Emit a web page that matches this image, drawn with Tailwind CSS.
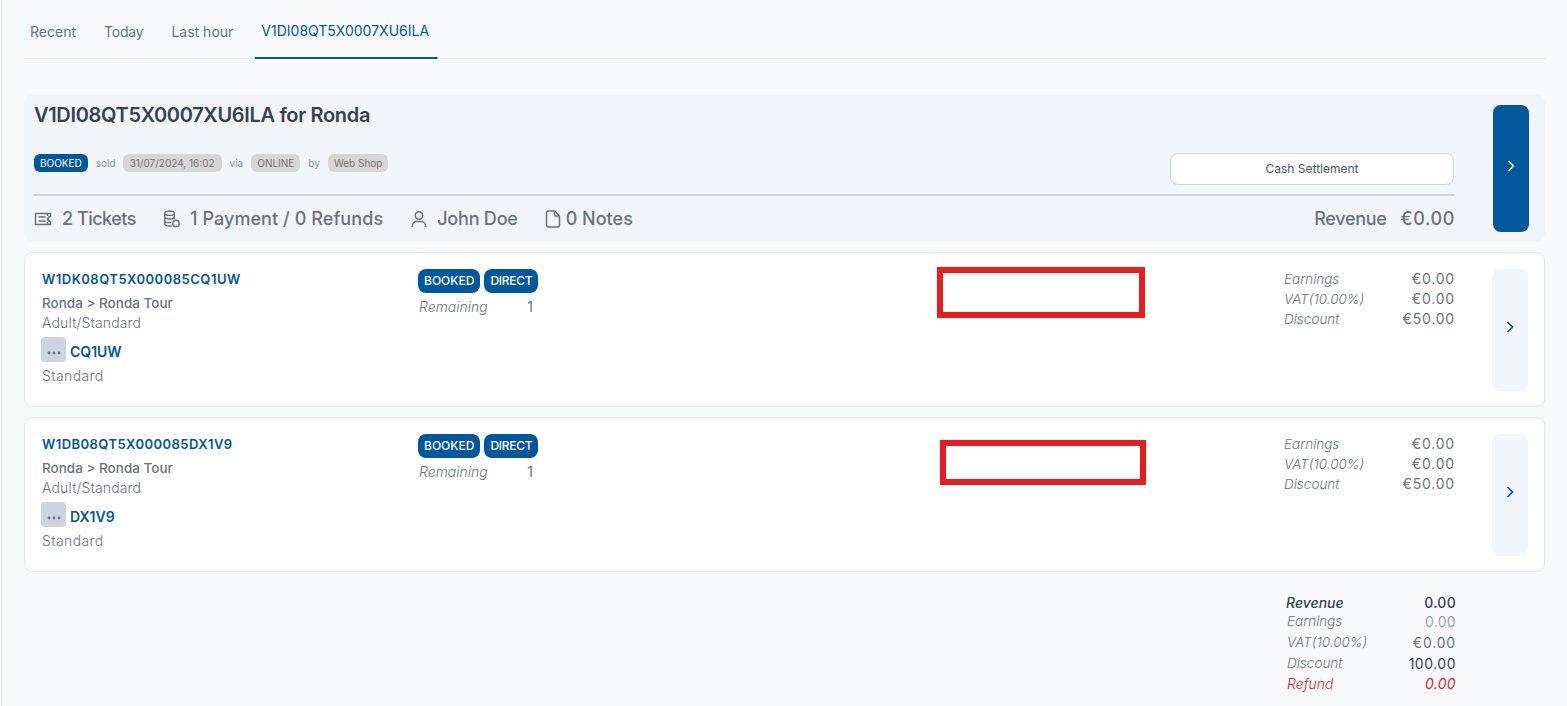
<!DOCTYPE html>
<html>
<head>
<meta charset="utf-8">
<script src="https://cdn.jsdelivr.net/npm/@tailwindcss/browser@4"></script>
</head>
<body class="bg-[#f8fafc] font-['Inter','Liberation_Sans',sans-serif] text-[#6b7280] overflow-hidden">
<div class="relative h-[706px] w-[1566px] overflow-hidden ml-px border-l border-[#e5e7eb] pl-[22px] pr-[22px]">
  <nav class="flex h-[59px] border-b border-[#e5e7eb] text-sm gap-4">
    <a class="flex h-[59px] items-center px-1.5 pt-1">Recent</a>
    <a class="flex h-[59px] items-center px-1.5 pt-1 tracking-[-0.2px]">Today</a>
    <a class="flex h-[59px] items-center px-1.5 pt-1">Last hour</a>
    <a class="flex h-[59px] items-center pl-1.5 pr-2 pt-1 text-[#01579b] border-b-2 border-[#01579b]">V1DI08QT5X0007XU6ILA</a>
  </nav>

  <section class="mt-[36px] h-[146px] rounded-lg bg-[#f2f5f9] pl-2.5 pr-4 pt-2.5 flex gap-[39px]">
    <div class="flex-1 min-w-0">
      <h1 class="text-xl leading-5 font-semibold text-[#374151] tracking-[-0.33px]">V1DI08QT5X0007XU6ILA for Ronda</h1>
      <div class="mt-7 h-[41px] flex items-start justify-between">
        <div class="flex items-center gap-2 text-[10px] mt-px">
          <span class="rounded-md bg-[#01579b] text-white px-[6px] h-[18px] flex items-center">BOOKED</span>
          <span class="text-[#8b929c]">sold</span>
          <span class="-ml-px rounded-md bg-[#d6d6d6] text-[#757575] px-[7px] h-[18px] flex items-center">31/07/2024, 16:02</span>
          <span class="text-[#8b929c]">via</span>
          <span class="rounded-md bg-[#d6d6d6] text-[#757575] px-[6px] h-[18px] flex items-center">ONLINE</span>
          <span class="text-[#8b929c]">by</span>
          <span class="rounded-md bg-[#d6d6d6] text-[#757575] px-[6px] h-[18px] flex items-center">Web Shop</span>
        </div>
        <button class="w-[284px] h-8 rounded-lg bg-white border border-[#d1d5db] text-xs text-[#4b5563]">Cash Settlement</button>
      </div>
      <div class="border-t-2 border-[#d1d5db] pt-[11px] flex items-center justify-between text-lg leading-6 font-medium">
        <div class="flex items-center">
          <svg class="w-[18px] h-[14px] mr-2.5" viewBox="0 0 18 14" fill="none" stroke="currentColor" stroke-width="1.5"><path d="M1.5 1.5h15v3a2.5 2.5 0 0 0 0 5v3h-15z"/><path d="M4.5 5h7M4.5 9h7M13.5 2v2M13.5 6v2M13.5 10v2"/></svg>
          <span class="tracking-[-0.5px]">2 Tickets</span>
          <svg class="w-[18px] h-[18px] ml-[27px] mr-[9px]" viewBox="0 0 18 18" fill="none" stroke="currentColor" stroke-width="1.4"><ellipse cx="6.5" cy="3.2" rx="4.8" ry="2.2"/><path d="M1.7 3.2v10.6c0 1.2 2 2.2 4.8 2.2h2M11.3 3.2v6M1.7 6.8c0 1.2 2 2.2 4.8 2.2s4.8-1 4.8-2.2M1.7 10.4c0 1.2 2 2.2 4.8 2.2h1.5"/><circle cx="13" cy="13.4" r="3.2"/></svg>
          <span class="tracking-[0.08px]">1 Payment / 0 Refunds</span>
          <svg class="w-[18px] h-[18px] ml-[27px] mr-[9px]" viewBox="0 0 18 18" fill="none" stroke="currentColor" stroke-width="1.5"><circle cx="9" cy="5.5" r="3.7"/><path d="M2.5 17v-1.5a4 4 0 0 1 4-4h5a4 4 0 0 1 4 4V17"/></svg>
          <span class="tracking-[-0.2px]">John Doe</span>
          <svg class="w-[16px] h-[18px] ml-[27px] mr-[5px]" viewBox="0 0 16 18" fill="none" stroke="currentColor" stroke-width="1.5"><path d="M9.5 1H3.5a2 2 0 0 0-2 2v12a2 2 0 0 0 2 2h9a2 2 0 0 0 2-2V6z"/><path d="M9.5 1v3.5a1.5 1.5 0 0 0 1.5 1.5h3.5"/></svg>
          <span>0 Notes</span>
        </div>
        <div class="flex gap-3.5 -mr-px"><span class="tracking-[-0.3px]">Revenue</span><span class="tracking-[0.6px]">€0.00</span></div>
      </div>
    </div>
    <button class="w-9 h-[127px] rounded-lg bg-[#01579b] text-white flex items-center justify-center shrink-0 pb-[5px]">
      <svg class="w-5 h-5" viewBox="0 0 24 24" fill="none" stroke="currentColor" stroke-width="2"><path d="m9 6 6 6-6 6"/></svg>
    </button>
  </section>

  <article class="mt-[11px] h-[155px] rounded-lg bg-white border border-[#e5e7eb] pl-[17px] pr-4 pt-4 flex text-sm">
    <div class="w-[376px] shrink-0">
      <div class="text-[#01579b] font-semibold leading-5 text-[13px] tracking-[0.5px]">W1DK08QT5X000085CQ1UW</div>
      <div class="mt-1 font-medium leading-5 text-[13.5px]">Ronda &gt; Ronda Tour</div>
      <div class="leading-5 font-light tracking-[0.15px]">Adult/Standard</div>
      <div class="mt-1 -ml-px flex items-center gap-1">
        <button class="w-[25px] h-[25px] rounded bg-[#cbd5e1] flex items-end justify-center pb-[7px]">
          <svg class="block w-[14px] h-[4px]" viewBox="0 0 14 4" fill="#6b7280"><circle cx="2" cy="2" r="1.4"/><circle cx="7" cy="2" r="1.4"/><circle cx="12" cy="2" r="1.4"/></svg>
        </button>
        <span class="text-[#01579b] font-semibold pt-[5px]">CQ1UW</span>
      </div>
      <div class="mt-1 leading-5 font-light tracking-[0.4px]">Standard</div>
    </div>
    <div class="w-[120px] shrink-0">
      <div class="flex gap-1 text-xs font-medium text-white">
        <span class="rounded-lg bg-[#01579b] h-6 px-1.5 flex items-center">BOOKED</span>
        <span class="rounded-lg bg-[#01579b] h-6 px-1.5 flex items-center tracking-[-0.3px]">DIRECT</span>
      </div>
      <div class="mt-1 pl-px pr-[5px] flex justify-between leading-5"><i class="font-light">Remaining</i><span>1</span></div>
    </div>
    <div class="flex-1"></div>
    <div class="w-[171px] shrink-0 mr-[37px] leading-5">
      <div class="flex justify-between"><i class="font-light text-[13.5px]">Earnings</i><span class="tracking-[0.8px]">€0.00</span></div>
      <div class="flex justify-between"><i class="font-light text-[13.5px]">VAT(10.00%)</i><span class="tracking-[0.8px]">€0.00</span></div>
      <div class="flex justify-between"><i class="font-light text-[13.5px]">Discount</i><span class="tracking-[0.8px]">€50.00</span></div>
    </div>
    <button class="w-9 h-[122px] rounded-lg bg-[#f2f5f9] text-[#01579b] flex items-center justify-center shrink-0 pb-[6px]">
      <svg class="w-5 h-5" viewBox="0 0 24 24" fill="none" stroke="currentColor" stroke-width="2"><path d="m9 6 6 6-6 6"/></svg>
    </button>
  </article>

  <article class="mt-2.5 h-[155px] rounded-lg bg-white border border-[#e5e7eb] pl-[17px] pr-4 pt-4 flex text-sm">
    <div class="w-[376px] shrink-0">
      <div class="text-[#01579b] font-semibold leading-5 text-[13px] tracking-[0.45px]">W1DB08QT5X000085DX1V9</div>
      <div class="mt-1 font-medium leading-5 text-[13.5px]">Ronda &gt; Ronda Tour</div>
      <div class="leading-5 font-light tracking-[0.15px]">Adult/Standard</div>
      <div class="mt-1 -ml-px flex items-center gap-1">
        <button class="w-[25px] h-[25px] rounded bg-[#cbd5e1] flex items-end justify-center pb-[7px]">
          <svg class="block w-[14px] h-[4px]" viewBox="0 0 14 4" fill="#6b7280"><circle cx="2" cy="2" r="1.4"/><circle cx="7" cy="2" r="1.4"/><circle cx="12" cy="2" r="1.4"/></svg>
        </button>
        <span class="text-[#01579b] font-semibold pt-[5px]">DX1V9</span>
      </div>
      <div class="mt-1 leading-5 font-light tracking-[0.4px]">Standard</div>
    </div>
    <div class="w-[120px] shrink-0">
      <div class="flex gap-1 text-xs font-medium text-white">
        <span class="rounded-lg bg-[#01579b] h-6 px-1.5 flex items-center">BOOKED</span>
        <span class="rounded-lg bg-[#01579b] h-6 px-1.5 flex items-center tracking-[-0.3px]">DIRECT</span>
      </div>
      <div class="mt-1 pl-px pr-[5px] flex justify-between leading-5"><i class="font-light">Remaining</i><span>1</span></div>
    </div>
    <div class="flex-1"></div>
    <div class="w-[171px] shrink-0 mr-[37px] leading-5">
      <div class="flex justify-between"><i class="font-light text-[13.5px]">Earnings</i><span class="tracking-[0.8px]">€0.00</span></div>
      <div class="flex justify-between"><i class="font-light text-[13.5px]">VAT(10.00%)</i><span class="tracking-[0.8px]">€0.00</span></div>
      <div class="flex justify-between"><i class="font-light text-[13.5px]">Discount</i><span class="tracking-[0.8px]">€50.00</span></div>
    </div>
    <button class="w-9 h-[122px] rounded-lg bg-[#f2f5f9] text-[#01579b] flex items-center justify-center shrink-0 pb-[6px]">
      <svg class="w-5 h-5" viewBox="0 0 24 24" fill="none" stroke="currentColor" stroke-width="2"><path d="m9 6 6 6-6 6"/></svg>
    </button>
  </article>

  <div class="ml-[1262px] mt-[21px] w-[170px] text-sm">
    <div class="flex justify-between h-[19px] items-center font-medium text-[#374151]"><i>Revenue</i><span class="tracking-[0.3px]">0.00</span></div>
    <div class="flex justify-between h-[20px] items-center pl-px"><i class="font-light text-[13.5px]">Earnings</i><span class="text-[#9ca3af] tracking-[0.3px]">0.00</span></div>
    <div class="flex justify-between h-[21px] items-center pl-px"><i class="font-light text-[13.5px]">VAT(10.00%)</i><span class="tracking-[0.8px]">€0.00</span></div>
    <div class="flex justify-between h-[21px] items-center pl-px"><i class="font-light text-[13.5px]">Discount</i><span class="text-[#374151] tracking-[0.5px]">100.00</span></div>
    <div class="flex justify-between h-[19px] items-center pl-px text-[#dc2626] italic"><span class="font-light">Refund</span><span class="tracking-[0.3px]">0.00</span></div>
  </div>

  <div class="absolute left-[935px] top-[267px] w-[208px] h-[51px] border-[6px] border-[#e91c1f] bg-white"></div>
  <div class="absolute left-[938px] top-[440px] w-[206px] h-[45px] border-[6px] border-[#e91c1f] bg-white"></div>
</div>
</body>
</html>
